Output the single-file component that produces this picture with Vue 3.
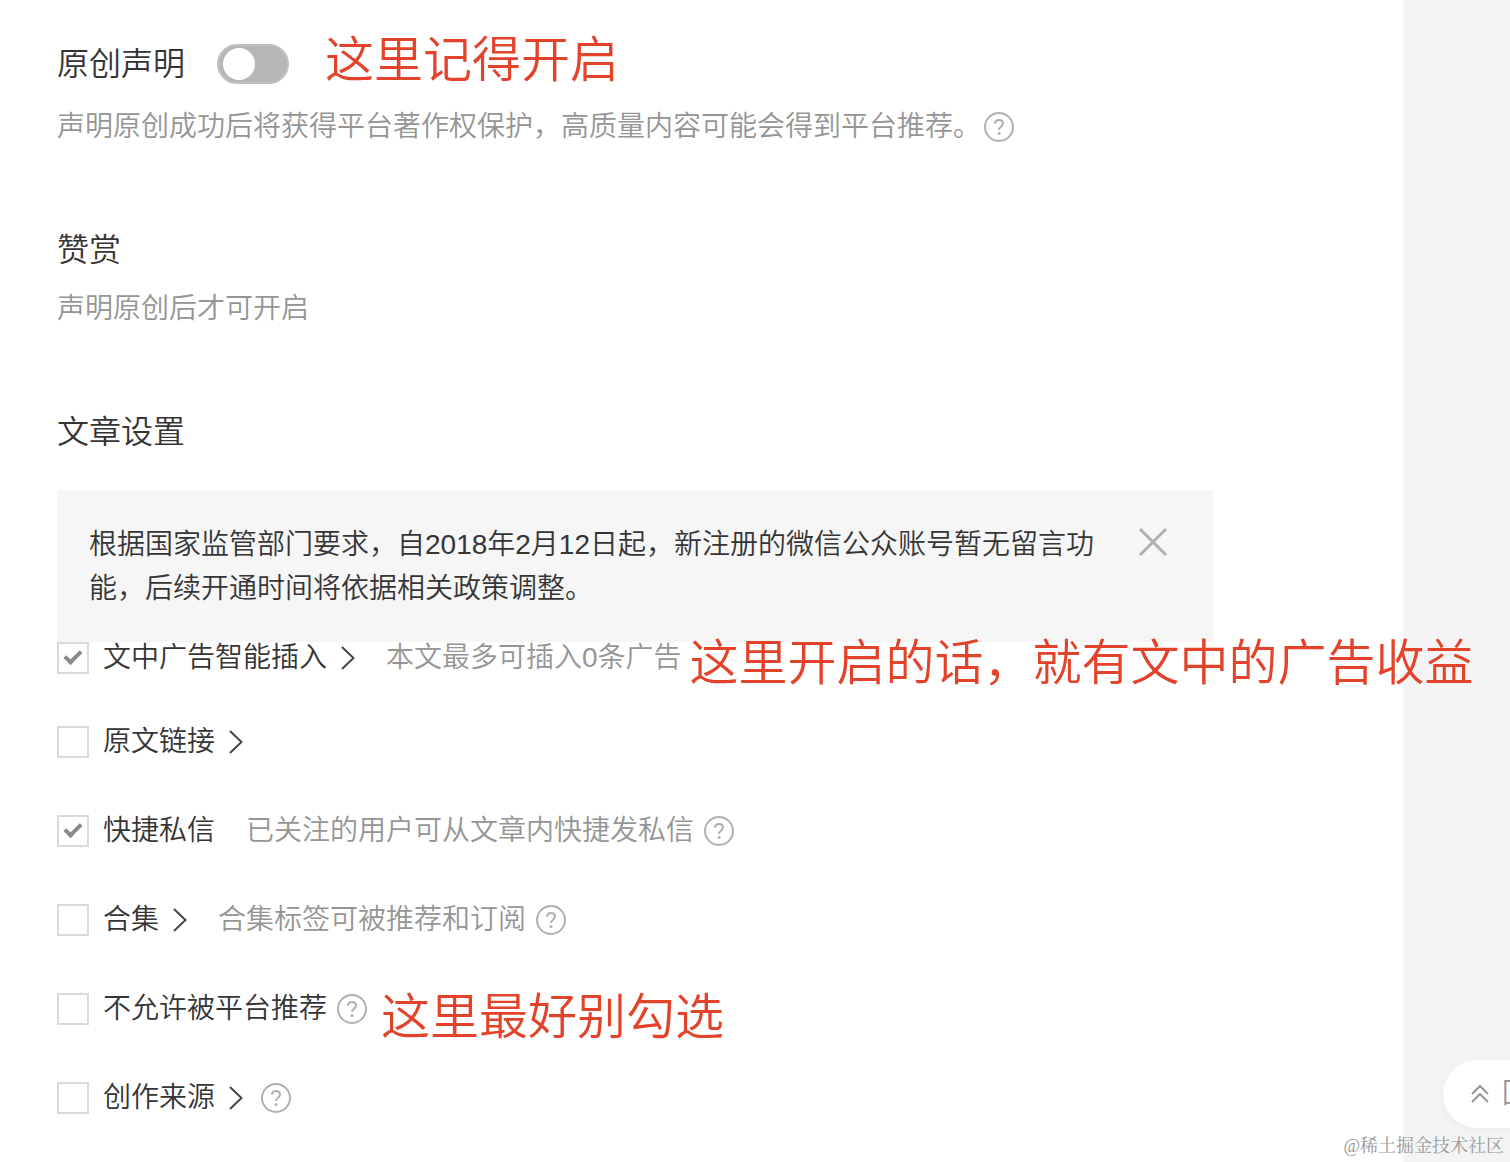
<script setup>
import { ref } from 'vue'

const original = ref(false)
const noticeVisible = ref(true)

const options = ref([
  { id: 'ads', label: '文中广告智能插入', checked: true, more: true, hint: '本文最多可插入0条广告', help: false, note: '这里开启的话，就有文中的广告收益' },
  { id: 'link', label: '原文链接', checked: false, more: true, hint: '', help: false, note: '' },
  { id: 'message', label: '快捷私信', checked: true, more: false, hint: '已关注的用户可从文章内快捷发私信', help: true, note: '' },
  { id: 'album', label: '合集', checked: false, more: true, hint: '合集标签可被推荐和订阅', help: true, note: '' },
  { id: 'recommend', label: '不允许被平台推荐', checked: false, more: false, hint: '', help: true, note: '这里最好别勾选' },
  { id: 'source', label: '创作来源', checked: false, more: true, hint: '', help: true, note: '' }
])
</script>

<template>
  <div class="page">
    <main class="content">
      <section class="section">
        <div class="title-row">
          <label class="title" for="original">原创声明</label>
          <input id="original" v-model="original" class="switch" type="checkbox" role="switch" />
          <span class="note note-title">这里记得开启</span>
        </div>
        <p class="desc desc-original">
          声明原创成功后将获得平台著作权保护，高质量内容可能会得到平台推荐。<button class="help" type="button" aria-label="帮助">
            <svg viewBox="0 0 30 30" width="30" height="30">
              <circle cx="15" cy="15" r="14" />
              <path d="M11 11.800c0-2.200 1.700-3.800 4-3.800s4 1.500 4 3.600c0 3-4 3.200-4 6.400" />
              <circle class="dot" cx="15" cy="21.500" r="1.500" />
            </svg>
          </button>
        </p>
      </section>

      <section class="section">
        <h2 class="title">赞赏</h2>
        <p class="desc">声明原创后才可开启</p>
      </section>

      <section class="section">
        <h2 class="title">文章设置</h2>
        <div v-if="noticeVisible" class="notice">
          <p class="notice-text">根据国家监管部门要求，自2018年2月12日起，新注册的微信公众账号暂无留言功能，后续开通时间将依据相关政策调整。</p>
          <button class="close" type="button" aria-label="关闭" @click="noticeVisible = false">
            <svg viewBox="0 0 30 30" width="30" height="30"><path d="M2 2l26 26M28 2L2 28" /></svg>
          </button>
        </div>

        <ul class="options">
          <li v-for="item in options" :key="item.id" class="option">
            <input :id="item.id" v-model="item.checked" class="check" type="checkbox" />
            <label class="label" :for="item.id">{{ item.label }}</label>
            <svg v-if="item.more" class="arrow" viewBox="0 0 16 26" width="16" height="26"><path d="M2 2l11.500 11L2 24" /></svg>
            <span v-if="item.hint" class="hint">{{ item.hint }}</span>
            <button v-if="item.help" class="help" type="button" aria-label="帮助">
              <svg viewBox="0 0 30 30" width="30" height="30">
                <circle cx="15" cy="15" r="14" />
                <path d="M11 11.800c0-2.200 1.700-3.800 4-3.800s4 1.500 4 3.600c0 3-4 3.200-4 6.400" />
                <circle class="dot" cx="15" cy="21.500" r="1.500" />
              </svg>
            </button>
            <span v-if="item.note" class="anchor"><span class="note" :class="'note-' + item.id">{{ item.note }}</span></span>
          </li>
        </ul>
      </section>
    </main>
    <aside class="side"></aside>

    <button class="to-top" type="button">
      <svg viewBox="0 0 20 20" width="20" height="20"><path d="M2 10l8-8 8 8M2 18l8-8 8 8" /></svg>
      <span>回</span>
    </button>
    <span class="watermark">@稀土掘金技术社区</span>
  </div>
</template>

<style>
body {
  margin: 0;
}
</style>

<style scoped>
.page {
  position: relative;
  display: flex;
  min-height: 100vh;
  overflow: hidden;
  background: #fff;
  color: #353535;
  font-family: "Liberation Sans", "Noto Sans CJK SC", sans-serif;
  font-size: 28px;
  font-weight: 350;
  line-height: 40px;
}

.content {
  flex: 1;
  min-width: 0;
  box-sizing: border-box;
  padding: 44px 57px 40px;
  display: flex;
  flex-direction: column;
  gap: 83px;
}

.side {
  flex: none;
  width: 107px;
  background: #f4f4f4;
}

.title-row {
  display: flex;
  align-items: center;
}

.title {
  margin: 0;
  font-size: 32px;
  font-weight: inherit;
  line-height: 40px;
}

.switch {
  appearance: none;
  width: 72px;
  height: 40px;
  margin: 0 0 0 32px;
  border: 2px solid #c0c0c0;
  border-radius: 20px;
  background: #b4b6b7;
  display: flex;
  align-items: center;
  padding: 0 4px;
  box-sizing: border-box;
}

.switch::before {
  content: "";
  width: 32px;
  height: 32px;
  border-radius: 50%;
  background: #fff;
}

.switch:checked {
  justify-content: flex-end;
  background: #07c160;
}

.note {
  color: #e2432a;
  font-size: 49px;
  line-height: 56px;
  white-space: nowrap;
}

.note-title {
  margin: -12px 0 -4px 36px;
}

.desc {
  display: flex;
  align-items: center;
  gap: 3px;
  margin: 19px 0 0;
  color: #959595;
}

.desc-original {
  margin-top: 23px;
}

.help {
  flex: none;
  width: 30px;
  height: 30px;
  padding: 0;
  border: 0;
  background: none;
}

.help svg,
.close svg {
  display: block;
  fill: none;
  stroke: #b0b0b0;
  stroke-width: 2;
}

.close svg {
  stroke-width: 3;
}

.help .dot {
  fill: #b0b0b0;
  stroke: none;
}

.notice {
  display: flex;
  align-items: flex-start;
  gap: 40px;
  max-width: 1156px;
  box-sizing: border-box;
  margin-top: 38px;
  padding: 33px 45px 31px 32px;
  background: #f6f6f6;
}

.notice-text {
  flex: 1;
  margin: 0;
  line-height: 44px;
}

.close {
  width: 30px;
  height: 30px;
  margin-top: 4px;
  padding: 0;
  border: 0;
  background: none;
}

.options {
  margin: 0;
  padding: 0;
  list-style: none;
}

.option {
  display: flex;
  align-items: center;
  height: 32px;
  margin-bottom: 57px;
  white-space: nowrap;
}

.option:first-child {
  margin-bottom: 52px;
}

.option:last-child {
  margin-bottom: 0;
}

.check {
  appearance: none;
  position: relative;
  width: 32px;
  height: 32px;
  box-sizing: border-box;
  margin: 0 14px 0 0;
  border: 2px solid #dadada;
  background: #fff;
}

.check:checked::after {
  content: "";
  position: absolute;
  left: 9px;
  top: 3px;
  width: 6px;
  height: 13px;
  border: solid #8a8a8a;
  border-width: 0 4px 4px 0;
  transform: rotate(45deg);
}

.arrow {
  margin-left: 13px;
  fill: none;
  stroke: #454545;
  stroke-width: 2;
}

.hint {
  margin-left: 31px;
  color: #959595;
}

.arrow + .hint {
  margin-left: 30px;
}

.option .help {
  margin-left: 10px;
}

.option .arrow + .help {
  margin-left: 17px;
}

.anchor {
  position: relative;
  align-self: stretch;
}

.anchor .note {
  position: absolute;
  top: -7px;
  left: 8px;
}

.anchor .note-recommend {
  top: -4px;
  left: 14px;
}

.to-top {
  position: absolute;
  right: 0;
  bottom: 34px;
  width: 67px;
  height: 68px;
  padding: 0 0 0 27px;
  display: flex;
  align-items: center;
  gap: 12px;
  overflow: hidden;
  border: 0;
  border-radius: 34px 0 0 34px;
  background: #fff;
  box-shadow: 0 2px 8px rgba(0, 0, 0, 0.04);
  color: #959595;
  font: inherit;
  white-space: nowrap;
}

.to-top svg {
  flex: none;
  fill: none;
  stroke: #959595;
  stroke-width: 2;
}

.watermark {
  position: absolute;
  right: 6px;
  bottom: 4px;
  color: #999;
  font-family: "Liberation Serif", "Noto Serif CJK SC", serif;
  font-size: 18px;
  font-weight: 400;
  line-height: 24px;
}
</style>
